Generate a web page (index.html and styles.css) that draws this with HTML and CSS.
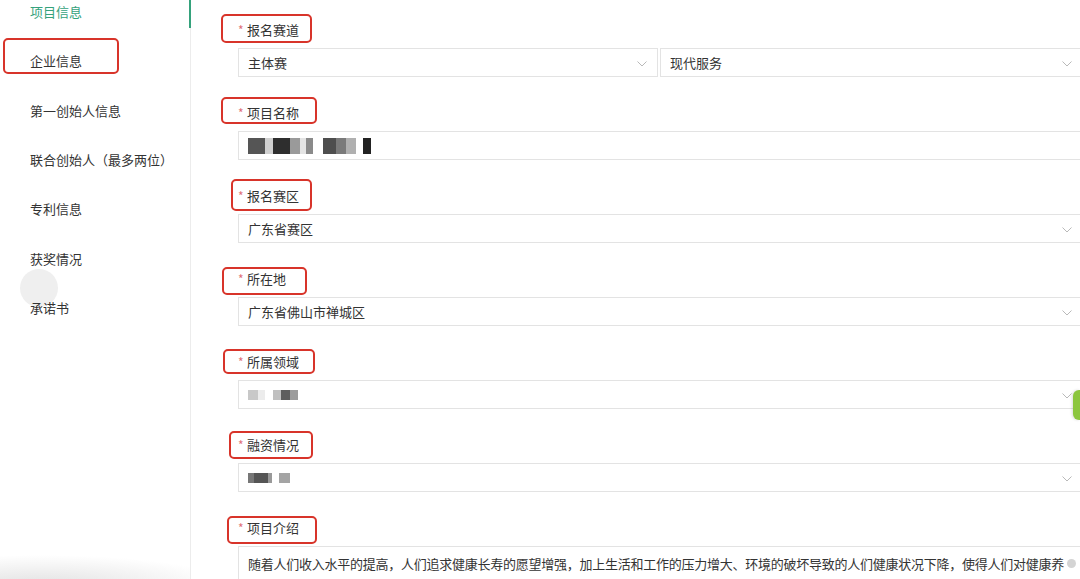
FILE: index.html
```html
<!DOCTYPE html>
<html lang="zh-CN">
<head>
    <meta charset="UTF-8">
    <meta name="viewport" content="width=device-width, initial-scale=1.0">
    <title>项目信息</title>
    <link rel="stylesheet" href="styles.css">
</head>
<body>
    <div class="sidebar">
        <span class="touch"></span>
        <ul class="nav">
            <li class="active">项目信息</li>
            <li>企业信息</li>
            <li>第一创始人信息</li>
            <li>联合创始人（最多两位）</li>
            <li>专利信息</li>
            <li>获奖情况</li>
            <li>承诺书</li>
        </ul>
        <span class="mark mark-nav"></span>
    </div>

    <div class="main">
        <div class="field">
            <div class="label"><span class="mark mark-1"></span><i>*</i>报名赛道</div>
            <div class="row">
                <div class="select select-half">主体赛<svg class="arrow" viewBox="0 0 10 6"><polyline points="0.5,0.5 5,5 9.5,0.5"/></svg></div>
                <div class="select">现代服务<svg class="arrow" viewBox="0 0 10 6"><polyline points="0.5,0.5 5,5 9.5,0.5"/></svg></div>
            </div>
        </div>

        <div class="field">
            <div class="label"><span class="mark mark-2"></span><i>*</i>项目名称</div>
            <div class="input"><span class="mosaic mosaic-name"></span></div>
        </div>

        <div class="field">
            <div class="label"><span class="mark mark-3"></span><i>*</i>报名赛区</div>
            <div class="select">广东省赛区<svg class="arrow" viewBox="0 0 10 6"><polyline points="0.5,0.5 5,5 9.5,0.5"/></svg></div>
        </div>

        <div class="field">
            <div class="label"><span class="mark mark-4"></span><i>*</i>所在地</div>
            <div class="select">广东省佛山市禅城区<svg class="arrow" viewBox="0 0 10 6"><polyline points="0.5,0.5 5,5 9.5,0.5"/></svg></div>
        </div>

        <div class="field">
            <div class="label"><span class="mark mark-5"></span><i>*</i>所属领域</div>
            <div class="select"><span class="mosaic mosaic-area"></span><svg class="arrow" viewBox="0 0 10 6"><polyline points="0.5,0.5 5,5 9.5,0.5"/></svg></div>
        </div>

        <div class="field">
            <div class="label"><span class="mark mark-6"></span><i>*</i>融资情况</div>
            <div class="select"><span class="mosaic mosaic-fund"></span><svg class="arrow" viewBox="0 0 10 6"><polyline points="0.5,0.5 5,5 9.5,0.5"/></svg></div>
        </div>

        <div class="field">
            <div class="label"><span class="mark mark-7"></span><i>*</i>项目介绍</div>
            <div class="textarea">随着人们收入水平的提高，人们追求健康长寿的愿望增强，加上生活和工作的压力增大、环境的破坏导致的人们健康状况下降，使得人们对健康养生的需求逐年增加，西方国家也在"上工治未病"方面，人们一一更加注重未病，人们一一更注重健康。而后，一层已完全实现了健康发展，通过大量的实践<span class="clear"></span></div>
        </div>
    </div>

    <span class="side-tab"></span>
</body>
</html>
```

FILE: styles.css
```css
body {
    margin: 0;
    padding: 0;
    display: flex;
    height: 579px;
    overflow: hidden;
    font-family: "Noto Sans CJK SC", "Noto Sans", sans-serif;
    font-size: 13px;
    color: #333;
    background-color: #fff;
}

/* sidebar */

.sidebar {
    width: 190px;
    flex-shrink: 0;
    border-right: 1px solid #ececec;
    position: relative;
    background: radial-gradient(ellipse 190px 30px at 40px 585px, #e2e2e2, rgba(255, 255, 255, 0));
}

.nav {
    list-style: none;
    margin: -13px 0 0 0;
    padding: 0;
    position: relative;
}

.nav li {
    height: 49.3px;
    display: flex;
    align-items: center;
    padding-left: 30px;
    position: relative;
}

.nav li.active {
    color: #35a27c;
}

.nav li.active::after {
    content: "";
    position: absolute;
    right: -1px;
    top: 13px;
    bottom: 8px;
    width: 2px;
    background-color: #35a27c;
}

.touch {
    position: absolute;
    left: 20px;
    top: 269px;
    width: 38px;
    height: 38px;
    border-radius: 50%;
    background-color: #efefef;
}

/* red annotation boxes */

.mark {
    position: absolute;
    border: 2px solid #d8342a;
    border-radius: 5px;
    box-sizing: border-box;
    pointer-events: none;
}

.mark-nav { left: 3px; top: 38px; width: 116px; height: 36px; }
.mark-1 { left: -17px; top: -6px; width: 91px; height: 29px; }
.mark-2 { left: -17px; top: -6px; width: 96px; height: 27px; }
.mark-3 { left: -7px; top: -7px; width: 81px; height: 32px; }
.mark-4 { left: -16px; top: -2px; width: 85px; height: 28px; }
.mark-5 { left: -15px; top: -3px; width: 92px; height: 25px; }
.mark-6 { left: -9px; top: -4px; width: 84px; height: 28px; }
.mark-7 { left: -11px; top: -2px; width: 90px; height: 28px; }

/* form */

.main {
    flex: 1;
    padding: 20px 0 0 47px;
}

.field {
    margin-bottom: 26px;
}

.label {
    position: relative;
    height: 20px;
    line-height: 20px;
    margin-bottom: 8px;
}

.label i {
    font-style: normal;
    color: #e0707a;
    font-size: 12px;
    margin-right: 2px;
    display: inline-block;
    width: 7px;
}

.row {
    display: flex;
    gap: 2px;
}

.select, .input, .textarea {
    position: relative;
    flex: 1;
    height: 29px;
    box-sizing: border-box;
    border: 1px solid #e3e3e3;
    border-right: none;
    padding-left: 9px;
    display: flex;
    align-items: center;
    background-color: #fff;
}

.select-half {
    flex: 0 0 420px;
    border-right: 1px solid #e3e3e3;
}

.arrow {
    position: absolute;
    right: 8px;
    top: 12px;
    width: 10px;
    height: 6px;
    fill: none;
    stroke: #b9b9b9;
    stroke-width: 1;
}

.select-half .arrow {
    right: 10px;
}

.textarea {
    display: block;
    height: 60px;
    padding: 6px 10px 0 9px;
    line-height: 22px;
    letter-spacing: -0.25px;
}

.clear {
    position: absolute;
    right: 4px;
    top: 12px;
    width: 9px;
    height: 9px;
    border-radius: 50%;
    background-color: #d4d4d4;
}

/* pixelated placeholders */

.mosaic {
    display: inline-block;
    height: 16px;
}

.mosaic-name {
    width: 123px;
    background: linear-gradient(to right,
        #555 0 17px, #d0d0d0 17px 25px, #2e2e2e 25px 42px, #9a9a9a 42px 52px,
        #e4e4e4 52px 58px, #8a8a8a 58px 65px, #fff 65px 75px, #4e4e4e 75px 88px,
        #7a7a7a 88px 98px, #b0b0b0 98px 108px, #fff 108px 115px, #222 115px 123px);
}

.mosaic-area {
    width: 50px;
    height: 10px;
    background: linear-gradient(to right,
        #c8c8c8 0 10px, #ececec 10px 17px, #fff 17px 25px, #c0c0c0 25px 33px,
        #5e5e5e 33px 42px, #9c9c9c 42px 50px);
}

.mosaic-fund {
    width: 42px;
    height: 10px;
    background: linear-gradient(to right,
        #777 0 6px, #555 6px 20px, #999 20px 24px, #fff 24px 31px, #a4a4a4 31px 40px);
}

.side-tab {
    position: absolute;
    right: 0;
    top: 390px;
    width: 7px;
    height: 30px;
    border-radius: 6px 0 0 6px;
    background-color: #8cc63e;
    box-shadow: -1px 0 3px rgba(0, 0, 0, 0.15);
}
```
